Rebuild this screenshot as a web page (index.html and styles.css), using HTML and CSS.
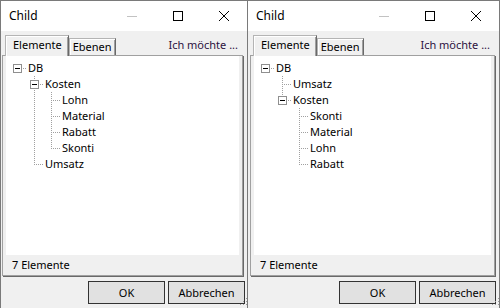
FILE: index.html
```html
<!DOCTYPE html>
<html lang="de">
<head>
  <meta charset="UTF-8">
  <title>Child</title>
  <link rel="stylesheet" href="styles.css">
</head>
<body>
  <div class="desk">

    <div class="win">
      <div class="titlebar">
        <span class="title">Child</span>
        <span class="cap"><svg width="10" height="10"><path d="M0 5.5h10" stroke="#c2c2c2"/></svg></span>
        <span class="cap"><svg width="10" height="10"><rect x="0.5" y="0.5" width="9" height="9" fill="none" stroke="#000"/></svg></span>
        <span class="cap"><svg width="10" height="10"><path d="M0 0L10 10M10 0L0 10" stroke="#000"/></svg></span>
      </div>
      <div class="body">
        <div class="tabs">
          <span class="tab on">Elemente</span>
          <span class="tab">Ebenen</span>
          <span class="want">Ich möchte ...</span>
        </div>
        <div class="panel">
          <div class="tree">
            <div class="row"><span class="cell root"><i class="box"></i></span><span class="label">DB</span></div>
            <div class="row"><span class="cell"></span><span class="cell tee"><i class="box"></i></span><span class="label">Kosten</span></div>
            <div class="row"><span class="cell"></span><span class="cell v"></span><span class="cell tee"></span><span class="label">Lohn</span></div>
            <div class="row"><span class="cell"></span><span class="cell v"></span><span class="cell tee"></span><span class="label">Material</span></div>
            <div class="row"><span class="cell"></span><span class="cell v"></span><span class="cell tee"></span><span class="label">Rabatt</span></div>
            <div class="row"><span class="cell"></span><span class="cell v"></span><span class="cell ell"></span><span class="label">Skonti</span></div>
            <div class="row"><span class="cell"></span><span class="cell ell"></span><span class="label">Umsatz</span></div>
          </div>
          <div class="status">7 Elemente</div>
        </div>
        <div class="btns">
          <button class="btn">OK</button>
          <button class="btn">Abbrechen</button>
        </div>
        <span class="grip"><svg width="10" height="10"><path d="M9 1h1v1h-1zM6 4h1v1h-1zM9 4h1v1h-1zM3 7h1v1h-1zM6 7h1v1h-1zM9 7h1v1h-1z" fill="#9a9a9a"/></svg></span>
      </div>
    </div>

    <div class="win wide">
      <div class="titlebar">
        <span class="title">Child</span>
        <span class="cap"><svg width="10" height="10"><path d="M0 5.5h10" stroke="#c2c2c2"/></svg></span>
        <span class="cap"><svg width="10" height="10"><rect x="0.5" y="0.5" width="9" height="9" fill="none" stroke="#000"/></svg></span>
        <span class="cap"><svg width="10" height="10"><path d="M0 0L10 10M10 0L0 10" stroke="#000"/></svg></span>
      </div>
      <div class="body">
        <div class="tabs">
          <span class="tab on">Elemente</span>
          <span class="tab">Ebenen</span>
          <span class="want">Ich möchte ...</span>
        </div>
        <div class="panel">
          <div class="tree">
            <div class="row"><span class="cell root"><i class="box"></i></span><span class="label">DB</span></div>
            <div class="row"><span class="cell"></span><span class="cell tee"></span><span class="label">Umsatz</span></div>
            <div class="row"><span class="cell"></span><span class="cell ell"><i class="box"></i></span><span class="label">Kosten</span></div>
            <div class="row"><span class="cell"></span><span class="cell"></span><span class="cell tee"></span><span class="label">Skonti</span></div>
            <div class="row"><span class="cell"></span><span class="cell"></span><span class="cell tee"></span><span class="label">Material</span></div>
            <div class="row"><span class="cell"></span><span class="cell"></span><span class="cell tee"></span><span class="label">Lohn</span></div>
            <div class="row"><span class="cell"></span><span class="cell"></span><span class="cell ell"></span><span class="label">Rabatt</span></div>
          </div>
          <div class="status">7 Elemente</div>
        </div>
        <div class="btns">
          <button class="btn">OK</button>
          <button class="btn">Abbrechen</button>
        </div>
        <span class="grip"><svg width="10" height="10"><path d="M9 1h1v1h-1zM6 4h1v1h-1zM9 4h1v1h-1zM3 7h1v1h-1zM6 7h1v1h-1zM9 7h1v1h-1z" fill="#9a9a9a"/></svg></span>
      </div>
    </div>

  </div>
</body>
</html>
```

FILE: styles.css
```css
* {
  margin: 0;
  padding: 0;
  box-sizing: border-box;
}

body {
  font-family: "Noto Sans", "Open Sans", sans-serif;
  font-size: 11px;
  color: #000;
  background: #f0f0f0;
}

.desk {
  display: flex;
  height: 308px;
}

/* fenster */
.win {
  width: 248px;
  height: 308px;
  display: flex;
  flex-direction: column;
  border-top: 1px solid #7a7a7a;
  border-left: 1px solid #7a7a7a;
  border-right: 1px solid #7a7a7a;
  background: #f0f0f0;
}

.win.wide {
  flex: 1;
  border-left: none;
}

.titlebar {
  height: 30px;
  display: flex;
  align-items: center;
  background: #fff;
}

.title {
  flex: 1;
  padding-left: 8px;
  font-size: 12px;
  line-height: 16px;
}

.cap {
  width: 46px;
  height: 30px;
  display: flex;
  align-items: center;
  justify-content: center;
}

.cap svg {
  display: block;
}

.body {
  flex: 1;
  display: flex;
  flex-direction: column;
  position: relative;
}

.wide .body {
  padding-left: 1px;
}

/* reiter */
.tabs {
  height: 24px;
  display: flex;
  align-items: flex-end;
  padding-left: 4px;
}

.tab {
  height: 17px;
  padding: 0 3px;
  line-height: 16px;
  background: #f0f0f0;
  border-top: 1px solid #b4b4b4;
  border-left: 1px solid #b4b4b4;
  border-right: 1px solid #696969;
  box-shadow: inset 1px 1px 0 #fff, inset -1px 0 0 #a0a0a0;
}

.tab.on {
  height: 21px;
  padding: 1px 6px 0 7px;
  margin-bottom: -1px;
  position: relative;
  z-index: 1;
}

.want {
  margin-left: auto;
  margin-bottom: 2px;
  padding-right: 9px;
  line-height: 16px;
  color: #2d1240;
}

.panel {
  height: 221px;
  margin: 0 4px 0 1px;
  padding: 0 3px;
  display: flex;
  flex-direction: column;
  border: 1px solid #a0a0a0;
  box-shadow: 1px 1px 0 #696969;
}

/* baum */
.tree {
  flex: 1;
  padding: 4px 0 0 3px;
  background: #fff;
}

.row {
  height: 16px;
  display: flex;
  align-items: center;
}

.cell {
  width: 17px;
  height: 16px;
  flex: none;
  position: relative;
}

.v::before,
.tee::before,
.ell::before {
  content: '';
  position: absolute;
  left: 8px;
  top: 0;
  width: 1px;
  height: 16px;
  background: repeating-linear-gradient(to bottom, #a0a0a0 0 1px, transparent 1px 2px);
}

.ell::before {
  height: 8px;
}

.tee::after,
.ell::after,
.root::after {
  content: '';
  position: absolute;
  left: 8px;
  top: 8px;
  width: 9px;
  height: 1px;
  background: repeating-linear-gradient(to right, #a0a0a0 0 1px, transparent 1px 2px);
}

.box {
  position: absolute;
  left: 4px;
  top: 4px;
  width: 9px;
  height: 9px;
  border: 1px solid #8f8f8f;
  background: #fff;
  z-index: 1;
}

.box::after {
  content: '';
  position: absolute;
  left: 1px;
  top: 3px;
  width: 5px;
  height: 1px;
  background: #000;
}

.label {
  margin-left: 2px;
  line-height: 16px;
}

.status {
  height: 20px;
  line-height: 20px;
  padding-left: 6px;
}

/* knoepfe */
.btns {
  display: flex;
  justify-content: flex-end;
  gap: 3px;
  margin-top: 5px;
  padding-right: 2px;
}

.wide .btns {
  padding-right: 3px;
}

.btn {
  width: 77px;
  height: 23px;
  font: inherit;
  color: #000;
  background: #e1e1e1;
  border: 1px solid #333;
}

.grip {
  position: absolute;
  right: 0;
  bottom: 1px;
}

.grip svg {
  display: block;
}
```
